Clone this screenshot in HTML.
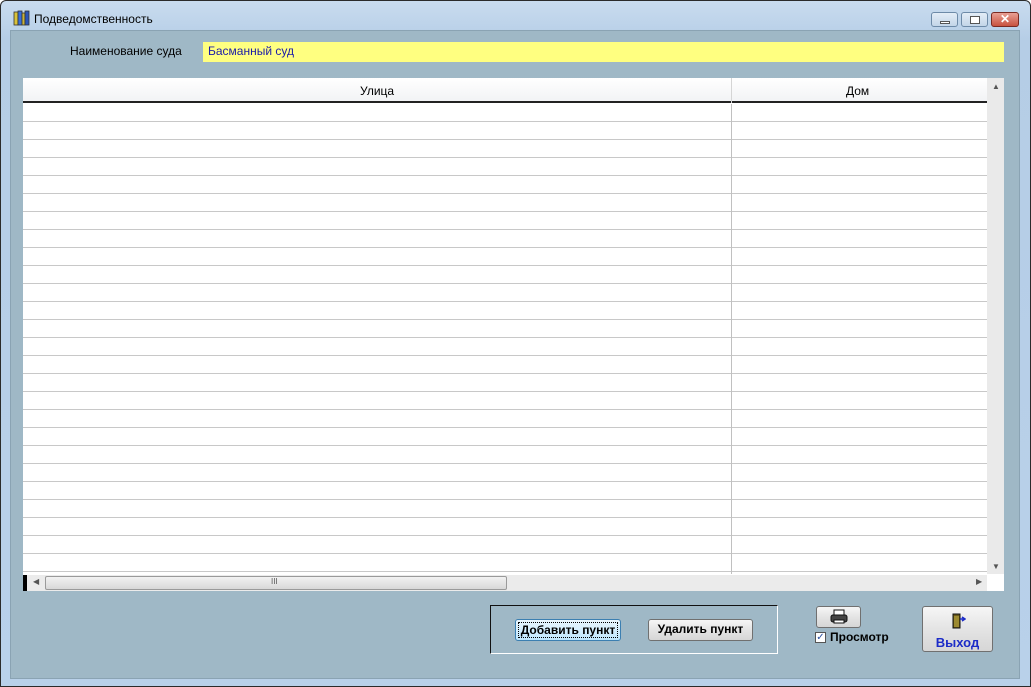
<!DOCTYPE html>
<html><head><meta charset="utf-8"><style>
*{margin:0;padding:0;box-sizing:border-box}
body{width:1031px;height:687px;overflow:hidden;background:#fff;font-family:"Liberation Sans",sans-serif;font-size:12px;position:relative}
.win{position:absolute;left:0;top:0;width:1031px;height:687px;border:1px solid #2b2b2b;border-radius:6px 6px 0 0;background:linear-gradient(#c9dcef,#b5cde6 40px,#b9d1ea);}
.client{position:absolute;left:10px;top:30px;width:1010px;height:649px;background:#9fb8c6;border:1px solid #8aa3b3}
.abs{position:absolute}
.title{left:33px;top:11px;font-size:12px;color:#000}
.btn{position:absolute;border:1px solid #707070;border-radius:3px;background:linear-gradient(#f6f6f6,#e4e4e4 50%,#d6d6d6);font-weight:bold;font-size:12px;text-align:center;color:#000}
</style></head><body>
<div class="win">
<svg class="abs" style="left:12px;top:9px" width="18" height="16"><rect x="1" y="2" width="4" height="13" fill="#d9c23a" stroke="#333" stroke-width=".8"/><rect x="5" y="1" width="4" height="14" fill="#3a6ed8" stroke="#333" stroke-width=".8"/><rect x="9" y="3" width="3" height="12" fill="#c9b23a" stroke="#333" stroke-width=".8"/><rect x="12" y="1" width="4" height="14" fill="#2a55b8" stroke="#333" stroke-width=".8"/></svg>
<div class="abs title">Подведомственность</div>
<div class="abs" style="left:930px;top:11px;width:27px;height:15px;border:1px solid #6d8aa8;border-radius:3px;background:linear-gradient(#e3edf7,#c3d5e8)"><div class="abs" style="left:8px;top:8px;width:10px;height:3px;background:#fff;border:1px solid #555"></div></div>
<div class="abs" style="left:960px;top:11px;width:27px;height:15px;border:1px solid #6d8aa8;border-radius:3px;background:linear-gradient(#e3edf7,#c3d5e8)"><div class="abs" style="left:8px;top:3px;width:10px;height:8px;background:#fff;border:1px solid #555"></div></div>
<div class="abs" style="left:990px;top:11px;width:28px;height:15px;border:1px solid #7a2a22;border-radius:3px;background:linear-gradient(#e8a095,#c8523f);color:#fff;font-weight:bold;font-size:12px;text-align:center;line-height:13px">✕</div>
</div>
<div class="client"></div>
<div class="abs" style="left:70px;top:44px;font-size:12px">Наименование суда</div>
<div class="abs" style="left:203px;top:42px;width:801px;height:20px;background:#ffff80;color:#1c1ca8;padding:2px 0 0 5px;font-size:12px">Басманный суд</div>
<div class="abs" style="left:23px;top:78px;width:981px;height:513px;background:#fff"></div>
<div class="abs" style="left:23px;top:78px;width:964px;height:25px;background:linear-gradient(#fff,#f2f3f5);border-bottom:2px solid #222"></div>
<div class="abs" style="left:731px;top:78px;width:1px;height:25px;background:#d5d5d5"></div>
<div class="abs" style="left:360px;top:84px">Улица</div>
<div class="abs" style="left:846px;top:84px">Дом</div>
<div class="abs" style="left:23px;top:104px;width:964px;height:470px;background:repeating-linear-gradient(#fff 0,#fff 17px,#c8c8c8 17px,#c8c8c8 18px)"></div>
<div class="abs" style="left:731px;top:104px;width:1px;height:470px;background:#c0c0c0"></div>
<div class="abs" style="left:987px;top:78px;width:17px;height:496px;background:#eaeaea"></div>
<div class="abs" style="left:992px;top:82px;font-size:8px;color:#555">▲</div>
<div class="abs" style="left:992px;top:562px;font-size:8px;color:#555">▼</div>
<div class="abs" style="left:23px;top:575px;width:964px;height:16px;background:#ebebeb"></div>
<div class="abs" style="left:23px;top:575px;width:4px;height:16px;background:#000"></div>
<div class="abs" style="left:33px;top:577px;font-size:8px;color:#555">◀</div>
<div class="abs" style="left:976px;top:577px;font-size:8px;color:#555">▶</div>
<div class="abs" style="left:45px;top:576px;width:462px;height:14px;border:1px solid #9a9a9a;border-radius:2px;background:linear-gradient(#f2f2f2,#d8d8d8)"></div>
<div class="abs" style="left:271px;top:577px;font-size:8px;color:#555">III</div>
<div class="abs" style="left:490px;top:605px;width:288px;height:49px;border:1px solid #111;border-right-color:#fff;border-bottom-color:#fff"></div>
<div class="btn" style="left:515px;top:619px;width:106px;height:22px;line-height:20px;border-color:#3c7fb1;background:linear-gradient(#eaf6fd,#bee6fd)"><span style="outline:1px dotted #000;padding:0 2px">Добавить пункт</span></div>
<div class="btn" style="left:648px;top:619px;width:105px;height:22px;line-height:19px">Удалить пункт</div>
<div class="btn" style="left:816px;top:606px;width:45px;height:22px"><svg width="18" height="16" style="margin-top:2px"><rect x="4" y="1" width="10" height="5" fill="#fff" stroke="#111"/><rect x="1" y="6" width="16" height="7" rx="2" fill="#444" stroke="#111"/><rect x="4" y="11" width="10" height="3" fill="#fff" stroke="#111"/></svg></div>
<div class="abs" style="left:815px;top:632px;width:11px;height:11px;border:1px solid #555;background:#fff;font-size:10px;line-height:9px;color:#2a4fa0;text-align:center">✓</div>
<div class="abs" style="left:830px;top:630px;font-weight:bold">Просмотр</div>
<div class="btn" style="left:922px;top:606px;width:71px;height:46px"><svg width="16" height="16" style="margin-top:6px"><rect x="3" y="1" width="7" height="14" fill="#6a5a1a" stroke="#111"/><rect x="4" y="3" width="5" height="11" fill="#9c8a30"/><path d="M10 6h5M12 4l3 2-3 2" stroke="#1c2cc8" stroke-width="1.5" fill="none"/></svg><div style="color:#1c2cc8;font-size:13px;margin-top:3px">Выход</div></div>
</body></html>
